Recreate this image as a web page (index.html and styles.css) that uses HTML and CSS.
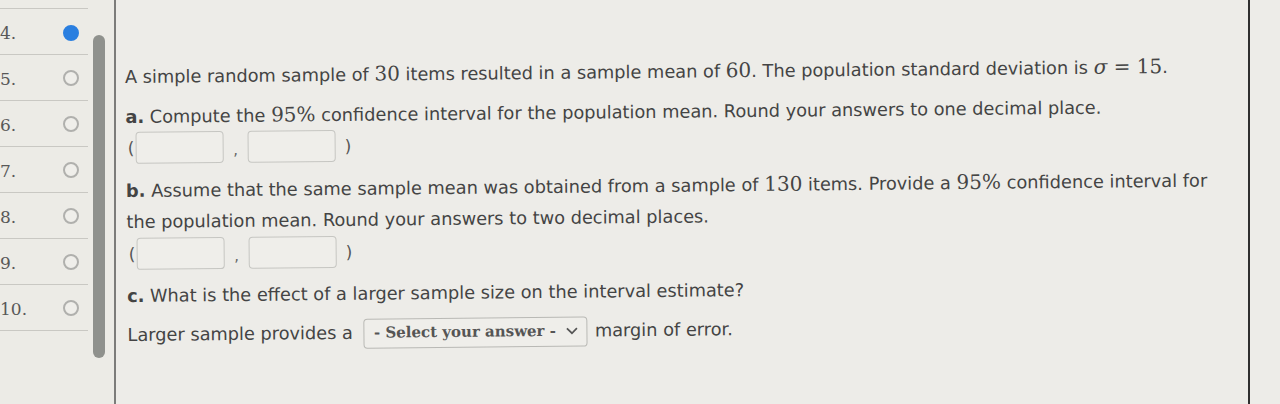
FILE: index.html
```html
<!DOCTYPE html>
<html lang="en">
<head>
<meta charset="utf-8">
<title>Confidence interval question</title>
<link rel="stylesheet" href="styles.css">
</head>
<body>
<div class="page">
  <nav class="qnav">
    <div class="qrow"><span class="qnum">4.</span><span class="radio on"></span></div>
    <div class="qrow"><span class="qnum">5.</span><span class="radio"></span></div>
    <div class="qrow"><span class="qnum">6.</span><span class="radio"></span></div>
    <div class="qrow"><span class="qnum">7.</span><span class="radio"></span></div>
    <div class="qrow"><span class="qnum">8.</span><span class="radio"></span></div>
    <div class="qrow"><span class="qnum">9.</span><span class="radio"></span></div>
    <div class="qrow"><span class="qnum">10.</span><span class="radio"></span></div>
  </nav>
  <div class="gutter"><div class="scrollbar"></div></div>
  <main class="panel">
    <div class="question">
      <p class="line l1">A simple random sample of <span class="m">30</span> items resulted in a sample mean of <span class="m">60</span>. The population standard deviation is <span class="m"><i>σ</i> = 15</span>.</p>
      <p class="line l2"><b>a.</b> Compute the <span class="m">95%</span> confidence interval for the population mean. Round your answers to one decimal place.</p>
      <div class="pair p1"><span class="par">(</span><span class="box"></span><span class="comma">,</span><span class="box"></span><span class="par">)</span></div>
      <p class="line l3"><b>b.</b> Assume that the same sample mean was obtained from a sample of <span class="m">130</span> items. Provide a <span class="m">95%</span> confidence interval for the population mean. Round your answers to two decimal places.</p>
      <div class="pair p2"><span class="par">(</span><span class="box"></span><span class="comma">,</span><span class="box"></span><span class="par">)</span></div>
      <p class="line l4"><b>c.</b> What is the effect of a larger sample size on the interval estimate?</p>
      <p class="line l5">Larger sample provides a <span class="select"><span class="seltext">- Select your answer -</span><svg class="chev" width="13" height="9" viewBox="0 0 13 9"><path d="M1.5 1.5 L6.5 6.5 L11.5 1.5" fill="none" stroke="#555" stroke-width="1.7"/></svg></span> margin of error.</p>
    </div>
  </main>
  <div class="edge"></div>
</div>
</body>
</html>
```
FILE: styles.css
```css
html, body {
  margin: 0;
  padding: 0;
  height: 404px;
  overflow: hidden;
  background: #ecebe6;
}
.page {
  display: flex;
  height: 404px;
  font-family: "DejaVu Sans", Verdana, sans-serif;
  color: #444;
}
.qnav {
  width: 88px;
  padding-top: 8px;
  flex: none;
}
.qrow {
  height: 45px;
  border-top: 1px solid #c9c8c3;
  display: flex;
  align-items: center;
  justify-content: space-between;
  padding-right: 9px;
}
.qrow:last-child {
  border-bottom: 1px solid #c9c8c3;
}
.qnum {
  font-family: "DejaVu Serif", "Liberation Serif", serif;
  font-size: 17px;
  color: #585858;
  margin-top: 3px;
}
.radio {
  width: 12px;
  height: 12px;
  border: 2px solid #b0b0ad;
  border-radius: 50%;
  background: #efeeea;
  margin-top: 1px;
}
.radio.on {
  background: #2a7fe0;
  border-color: #2a7fe0;
  margin-top: 2px;
}
.gutter {
  width: 26px;
  flex: none;
  padding-top: 35px;
  padding-left: 5px;
  box-sizing: border-box;
}
.scrollbar {
  width: 12px;
  height: 323px;
  border-radius: 6px;
  background: #8f918d;
}
.panel {
  flex: none;
  width: 1136px;
  border-left: 2px solid #7c7c7a;
  border-right: 2px solid #2f2f2f;
  padding-left: 9px;
  box-sizing: border-box;
  background: #edece8;
}
.question {
  transform: rotate(-0.55deg);
  transform-origin: 0 80px;
  padding-top: 62px;
}
.line {
  margin: 0;
  font-size: 17.75px;
  line-height: 31px;
}
.line b {
  font-weight: bold;
}
.m {
  font-family: "DejaVu Serif", "Liberation Serif", serif;
  font-size: 20px;
  line-height: 1;
  color: #454545;
}
.m i {
  font-style: italic;
}
.l2 { margin-top: 9px; }
.l3 { margin-top: 11px; width: 1105px; }
.l4 { margin-top: 10px; }
.l5 { margin-top: 8px; display: flex; align-items: center; }
.pair {
  display: flex;
  align-items: center;
  height: 34px;
}
.p1 { margin-top: -2px; }
.p2 { margin-top: -1px; }
.par {
  font-size: 17px;
  color: #555;
  width: 8px;
  margin-left: 2px;
}
.par:last-child { margin-left: 9px; }
.box {
  width: 86px;
  height: 30px;
  border: 1px solid #c6c6c2;
  border-radius: 4px;
  background: #efeeea;
}
.comma {
  width: 24px;
  text-align: center;
  font-size: 15px;
  color: #666;
  margin-top: 6px;
}
.select {
  display: inline-flex;
  align-items: center;
  height: 28px;
  margin: 0 7px 0 11px;
  padding: 0 8px 0 9px;
  border: 1px solid #b9b9b5;
  border-radius: 4px;
  background: #efeeea;
  gap: 10px;
}
.seltext {
  font-family: "DejaVu Serif", "Liberation Serif", serif;
  font-weight: bold;
  font-size: 15px;
  color: #555;
}
.edge {
  flex: 1;
  background: #edece8;
}
```
